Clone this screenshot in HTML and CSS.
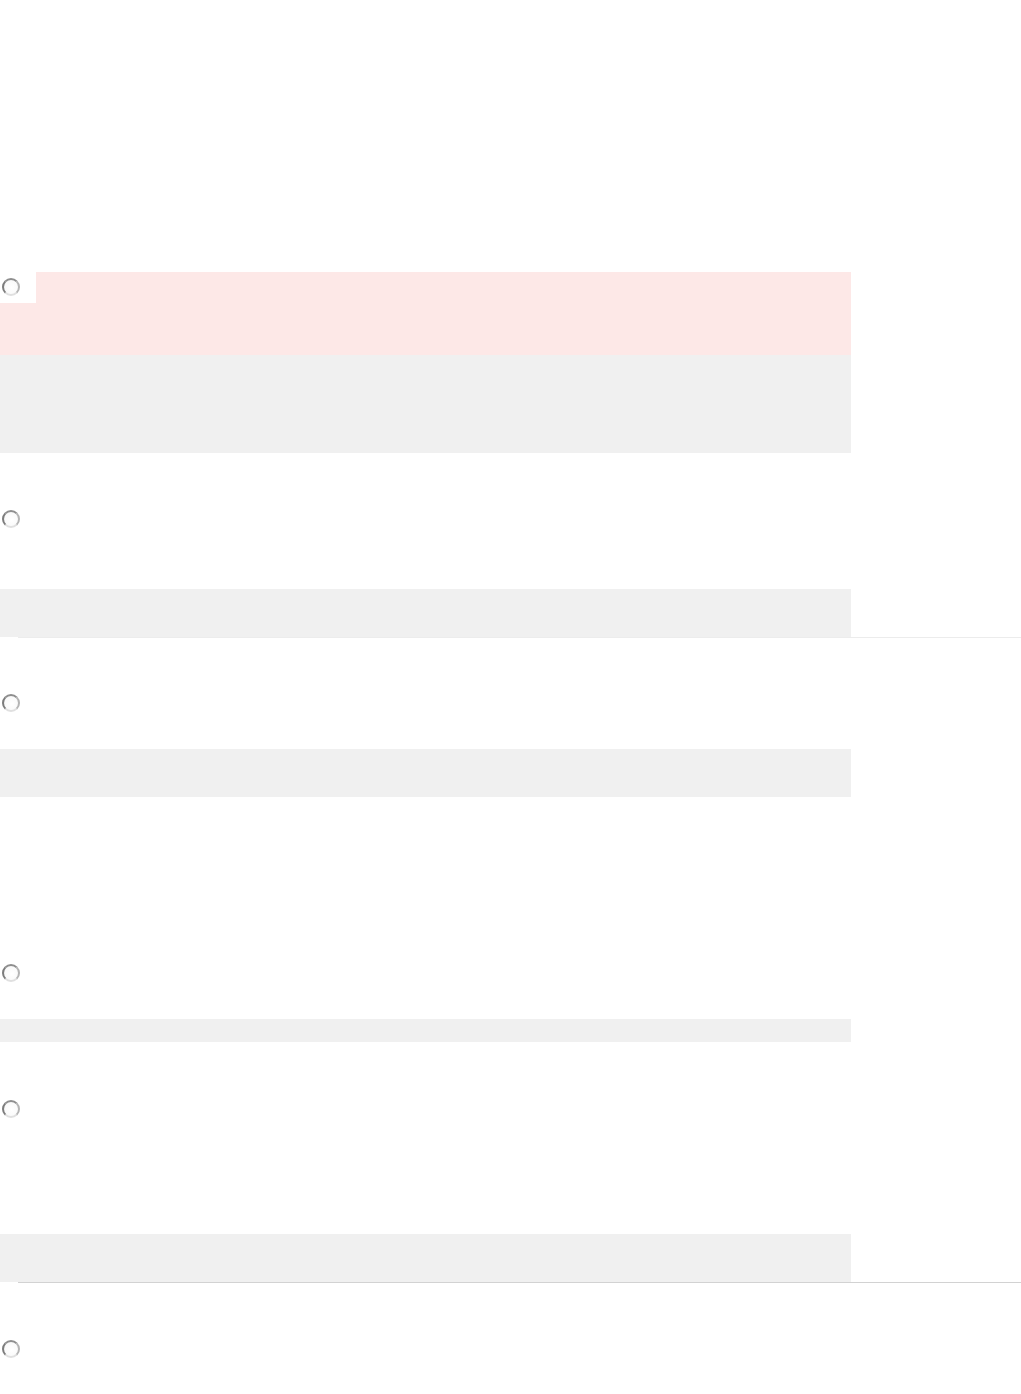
FILE: index.html
```html
<!DOCTYPE html>
<html>
<head>
<meta charset="utf-8">
<link rel="stylesheet" href="styles.css">
</head>
<body>
<div class="page">
  <section class="q q1">
    <div class="alert">
      <div class="radio-box"><span class="radio"></span></div>
    </div>
    <div class="panel p1"></div>
  </section>

  <section class="q q2">
    <div class="radio-row"><span class="radio"></span></div>
    <div class="panel p2"></div>
  </section>
  <hr class="rule light">

  <section class="q q3">
    <div class="radio-row"><span class="radio"></span></div>
    <div class="panel p3"></div>
  </section>

  <section class="q q4">
    <div class="radio-row"><span class="radio"></span></div>
    <div class="panel p4"></div>
  </section>

  <section class="q q5">
    <div class="radio-row"><span class="radio"></span></div>
    <div class="panel p5"></div>
  </section>
  <hr class="rule dark">

  <section class="q q6">
    <div class="radio-row"><span class="radio"></span></div>
  </section>
</div>
</body>
</html>
```

FILE: styles.css
```css
html, body {
  margin: 0;
  padding: 0;
  background: #ffffff;
  font-family: "Liberation Sans", Arial, sans-serif;
}

.page {
  width: 1021px;
  height: 1394px;
  overflow: hidden;
}

.q {
  width: 851px;
}

.q1 { padding-top: 272px; }

.alert {
  height: 83px;
  background: #fde8e7;
}

.radio-box {
  width: 36px;
  height: 31px;
  background: #ffffff;
  box-sizing: border-box;
  padding: 6px 0 0 2px;
}

.radio {
  display: block;
  width: 18px;
  height: 18px;
  box-sizing: border-box;
  border-radius: 50%;
  border: 2.5px solid;
  border-color: #8e8e8e #b4b4b4 #e0e0e0 #7c7c7c;
  background: radial-gradient(circle at 55% 55%, #ffffff 0%, #fafafa 60%, #ececec 100%);
}

.radio-row {
  height: 18px;
  padding-left: 2px;
}

.panel {
  background: #f0f0f0;
}

.p1 { height: 98px; }

.q2 { padding-top: 57px; }
.p2 { height: 48px; margin-top: 61px; }

.rule {
  border: 0;
  margin: 0 0 0 18px;
  height: 1px;
  width: 1003px;
}
.rule.light { background: #ececec; }
.rule.dark { background: #d2d2d2; }

.q3 { padding-top: 56px; }
.p3 { height: 48px; margin-top: 37px; }

.q4 { padding-top: 167px; }
.p4 { height: 23px; margin-top: 37px; }

.q5 { padding-top: 58px; }
.p5 { height: 48px; margin-top: 116px; }

.q6 { padding-top: 57px; }
```
